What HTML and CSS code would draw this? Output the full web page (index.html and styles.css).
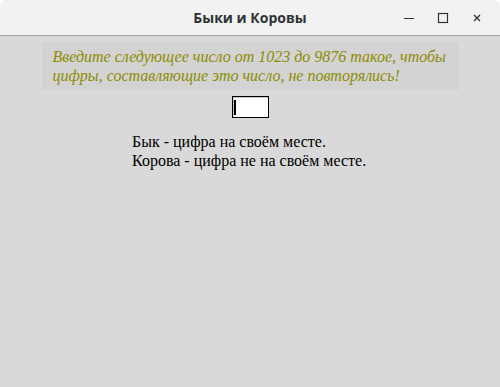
FILE: index.html
```html
<!DOCTYPE html>
<html lang="ru">
<head>
  <meta charset="UTF-8">
  <title>Быки и Коровы</title>
  <link rel="stylesheet" href="styles.css">
</head>
<body>
  <div class="window">
    <div class="titlebar">
      <span class="title">Быки и Коровы</span>
      <div class="controls">
        <span class="ctl">
          <svg width="12" height="12" viewBox="0 0 12 12"><path d="M1 6.5h10" stroke="#2e3436" stroke-width="1.2"/></svg>
        </span>
        <span class="ctl">
          <svg width="12" height="12" viewBox="0 0 12 12"><rect x="1.5" y="1.5" width="9" height="9" fill="none" stroke="#2e3436" stroke-width="1.2"/></svg>
        </span>
        <span class="ctl">
          <svg width="12" height="12" viewBox="0 0 12 12"><path d="M3 3l6 6M9 3l-6 6" stroke="#2e3436" stroke-width="1.3"/></svg>
        </span>
      </div>
    </div>

    <div class="content">
      <div class="prompt">
        Введите следующее число от 1023 до 9876 такое, чтобы
        цифры, составляющие это число, не повторялись!
      </div>

      <div class="entry">
        <input type="text" class="guess">
        <span class="caret"></span>
      </div>

      <div class="rules">
        Бык - цифра на своём месте.<br>
        Корова - цифра не на своём месте.
      </div>
    </div>
  </div>
</body>
</html>
```

FILE: styles.css
```css
/* General styles */
html, body {
  margin: 0;
  padding: 0;
  background-color: #ffffff;
}

.window {
  width: 500px;
  height: 387px;
  display: flex;
  flex-direction: column;
  background-color: #d9d9d9;
  border-radius: 8px 8px 0 0;
  overflow: hidden;
}

/* Title bar */
.titlebar {
  position: relative;
  height: 35px;
  background-color: #f2f2f2;
  border-bottom: 1px solid #a3a3a3;
  display: flex;
  align-items: center;
  justify-content: center;
  flex-shrink: 0;
}

.title {
  font-family: "Open Sans", "Noto Sans", sans-serif;
  font-weight: bold;
  font-size: 14px;
  color: #2e3436;
}

.controls {
  position: absolute;
  right: 6px;
  top: 0;
  height: 35px;
  display: flex;
  align-items: center;
}

.ctl {
  width: 34px;
  height: 24px;
  display: flex;
  align-items: center;
  justify-content: center;
}

/* Content */
.content {
  flex: 1;
  display: flex;
  flex-direction: column;
  align-items: center;
  padding-top: 6px;
}

.prompt {
  width: 401px;
  padding: 5px 5px 5px 11px;
  background-color: #d3d3d3;
  font-family: "Liberation Serif", serif;
  font-style: italic;
  font-size: 16px;
  line-height: 19px;
  color: #8c8c00;
}

/* Entry field */
.entry {
  position: relative;
  margin-top: 6px;
}

.guess {
  width: 31px;
  height: 20px;
  padding: 0 2px;
  margin: 0;
  border: 1px solid #000000;
  box-shadow: inset 1px 1px 0 #c8c8c8;
  background-color: #ffffff;
  font-size: 14px;
  outline: none;
  display: block;
}

.caret {
  position: absolute;
  left: 2px;
  top: 4px;
  width: 2px;
  height: 15px;
  background-color: #000000;
}

.rules {
  align-self: flex-start;
  margin-left: 132px;
  margin-top: 14px;
  font-family: "Liberation Serif", serif;
  font-size: 16px;
  line-height: 19px;
  color: #000000;
}
```
